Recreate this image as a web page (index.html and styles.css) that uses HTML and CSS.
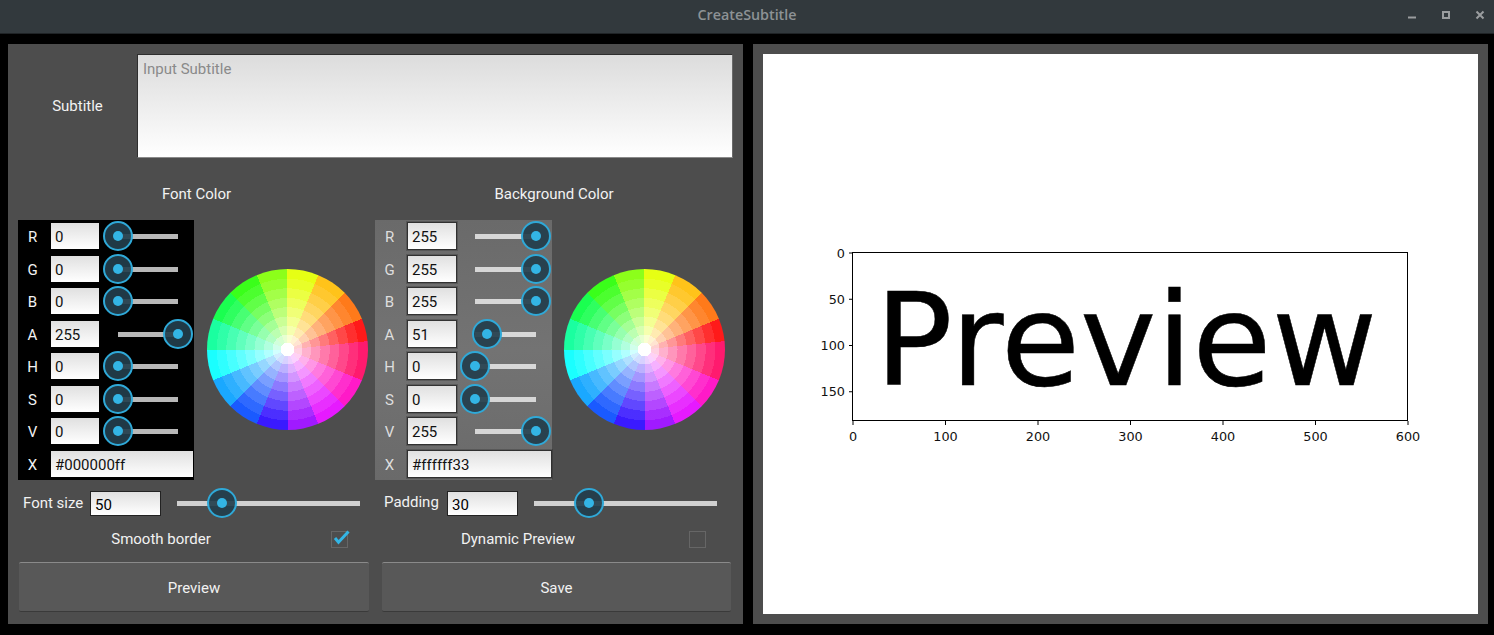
FILE: index.html
```html
<!DOCTYPE html>
<html lang="en">
<head>
<meta charset="utf-8">
<title>CreateSubtitle</title>
<link rel="stylesheet" href="styles.css">
</head>
<body>
<header class="titlebar">
  <span class="title">CreateSubtitle</span>
  <div class="wm">
    <svg class="wm-icon" viewBox="0 0 10 10"><path d="M1 7.5H9" class="wm-line"/></svg>
    <svg class="wm-icon" viewBox="0 0 10 10"><path d="M2 2H8V8H2Z" class="wm-line"/></svg>
    <svg class="wm-icon" viewBox="0 0 10 10"><path d="M1.5 1.5L8.5 8.5M8.5 1.5L1.5 8.5" class="wm-line"/></svg>
  </div>
</header>
<main class="main">
  <section class="panel controls">
    <div class="subtitle-row">
      <label class="subtitle-label">Subtitle</label>
      <textarea class="subtitle-input" placeholder="Input Subtitle"></textarea>
    </div>
    <div class="heads">
      <div class="head head-a">Font Color</div>
      <div class="head head-b">Background Color</div>
    </div>
    <div class="colors">
      <div class="color-col col-a">
        <div class="channels ch-black">
          <div class="ch"><span class="ch-l">R</span><input class="field" value="0"><div class="slider"><div class="track"></div><div class="thumb" style="left:0%"></div></div></div>
          <div class="ch"><span class="ch-l">G</span><input class="field" value="0"><div class="slider"><div class="track"></div><div class="thumb" style="left:0%"></div></div></div>
          <div class="ch"><span class="ch-l">B</span><input class="field" value="0"><div class="slider"><div class="track"></div><div class="thumb" style="left:0%"></div></div></div>
          <div class="ch"><span class="ch-l">A</span><input class="field" value="255"><div class="slider"><div class="track"></div><div class="thumb" style="left:100%"></div></div></div>
          <div class="ch"><span class="ch-l">H</span><input class="field" value="0"><div class="slider"><div class="track"></div><div class="thumb" style="left:0%"></div></div></div>
          <div class="ch"><span class="ch-l">S</span><input class="field" value="0"><div class="slider"><div class="track"></div><div class="thumb" style="left:0%"></div></div></div>
          <div class="ch"><span class="ch-l">V</span><input class="field" value="0"><div class="slider"><div class="track"></div><div class="thumb" style="left:0%"></div></div></div>
          <div class="ch"><span class="ch-l">X</span><input class="field field-wide" value="#000000ff"></div>
        </div>
        <div class="wheel"><div class="wheel-rings"></div></div>
      </div>
      <div class="color-col col-b">
        <div class="channels ch-grey">
          <div class="ch"><span class="ch-l">R</span><input class="field" value="255"><div class="slider"><div class="track"></div><div class="thumb" style="left:100%"></div></div></div>
          <div class="ch"><span class="ch-l">G</span><input class="field" value="255"><div class="slider"><div class="track"></div><div class="thumb" style="left:100%"></div></div></div>
          <div class="ch"><span class="ch-l">B</span><input class="field" value="255"><div class="slider"><div class="track"></div><div class="thumb" style="left:100%"></div></div></div>
          <div class="ch"><span class="ch-l">A</span><input class="field" value="51"><div class="slider"><div class="track"></div><div class="thumb" style="left:20%"></div></div></div>
          <div class="ch"><span class="ch-l">H</span><input class="field" value="0"><div class="slider"><div class="track"></div><div class="thumb" style="left:0%"></div></div></div>
          <div class="ch"><span class="ch-l">S</span><input class="field" value="0"><div class="slider"><div class="track"></div><div class="thumb" style="left:0%"></div></div></div>
          <div class="ch"><span class="ch-l">V</span><input class="field" value="255"><div class="slider"><div class="track"></div><div class="thumb" style="left:100%"></div></div></div>
          <div class="ch"><span class="ch-l">X</span><input class="field field-wide" value="#ffffff33"></div>
        </div>
        <div class="wheel"><div class="wheel-rings"></div></div>
      </div>
    </div>
    <div class="sizes">
      <div class="size size-a">
        <span class="size-l">Font size</span>
        <input class="num" value="50">
        <div class="slider big"><div class="track"></div><div class="thumb" style="left:24.6%"></div></div>
      </div>
      <div class="size size-b">
        <span class="size-l">Padding</span>
        <input class="num" value="30">
        <div class="slider big"><div class="track"></div><div class="thumb" style="left:30.2%"></div></div>
      </div>
    </div>
    <div class="checks">
      <div class="check">
        <span class="check-l">Smooth border</span>
        <span class="box">
          <svg class="tick" viewBox="0 0 20 20"><path d="M4 9L7.5 13.2L17.5 2.5"/></svg>
        </span>
      </div>
      <div class="check check-b">
        <span class="check-l">Dynamic Preview</span>
        <span class="box"></span>
      </div>
    </div>
    <div class="buttons">
      <button class="btn btn-a">Preview</button>
      <button class="btn btn-b">Save</button>
    </div>
  </section>
  <section class="panel output">
    <div class="canvas">
      <svg class="plot" viewBox="0 0 715 560">
        <text class="big-text" x="112" y="331">Preview</text>
        <rect class="axes" x="89.5" y="198.5" width="555" height="168"/>
        <path class="ticks" d="M90 367v4M182.500 367v4M275 367v4M367.500 367v4M460 367v4M552.500 367v4M645 367v4M86 199h4M86 245.250h4M86 291.500h4M86 337.750h4"/>
        <text class="tx" x="90" y="387">0</text>
        <text class="tx" x="182.500" y="387">100</text>
        <text class="tx" x="275" y="387">200</text>
        <text class="tx" x="367.500" y="387">300</text>
        <text class="tx" x="460" y="387">400</text>
        <text class="tx" x="552.500" y="387">500</text>
        <text class="tx" x="645" y="387">600</text>
        <text class="ty" x="82" y="203.500">0</text>
        <text class="ty" x="82" y="250">50</text>
        <text class="ty" x="82" y="296">100</text>
        <text class="ty" x="82" y="342">150</text>
      </svg>
    </div>
  </section>
</main>
</body>
</html>
```
FILE: styles.css
```css
* { box-sizing: border-box; }
html, body { margin: 0; height: 100%; overflow: hidden; }
body {
  background: #000;
  font-family: Roboto, "Liberation Sans", sans-serif;
  font-size: 15px;
  color: #f2f2f2;
  display: flex;
  flex-direction: column;
}
.titlebar {
  height: 34px;
  flex: none;
  background: #32393d;
  border-bottom: 1px solid #1f2326;
  display: flex;
  align-items: center;
  justify-content: center;
  position: relative;
}
.title {
  font-family: "Open Sans", sans-serif;
  font-weight: 600;
  font-size: 14.3px;
  color: #8d9295;
  position: relative;
  top: -2px;
}
.wm {
  position: absolute;
  right: 9px;
  top: 10px;
  display: flex;
  gap: 24px;
}
.wm-icon { width: 10px; height: 10px; display: block; }
.wm-line { fill: none; stroke: #9a9d9f; stroke-width: 2; }

.main {
  flex: 1;
  display: flex;
  gap: 10px;
  padding: 10px 6px 11px 8px;
  min-height: 0;
}
.panel { background: #4d4d4d; }
.controls {
  width: 735px;
  flex: none;
  padding: 10px 10px 0 10px;
}
.output {
  flex: 1;
  padding: 10px;
  display: flex;
}

.subtitle-row { display: flex; height: 104px; }
.subtitle-label {
  width: 119px;
  flex: none;
  text-align: center;
  align-self: center;
}
.subtitle-input {
  flex: 1;
  resize: none;
  margin: 0;
  outline: none;
  border: 1px solid #2e2e2e;
  border-bottom-color: #8a8a8a;
  border-right-color: #6a6a6a;
  padding: 4px 5px;
  background: linear-gradient(#dcdcdc, #ffffff);
  background-clip: padding-box;
  font: 15px/20px Roboto, sans-serif;
  color: #000;
}
.subtitle-input::placeholder { color: #8a8a8a; opacity: 1; }

.heads { display: flex; height: 62px; }
.head { padding-top: 26px; text-align: center; line-height: 20px; }
.head-a { width: 357px; }
.head-b { flex: 1; }

.colors { display: flex; height: 260px; }
.color-col { display: flex; align-items: flex-start; }
.col-a { width: 357px; }
.col-b { flex: 1; }
.channels { width: 176px; height: 260px; flex: none; }
.ch-black { background: #000; }
.ch-grey { background: linear-gradient(#6a6a6a, #737373 50%, #6a6a6a); width: 177px; }
.ch { height: 32.5px; display: flex; align-items: center; }
.ch-l { width: 29px; margin-right: 3px; padding-top: 2px; text-align: center; flex: none; }
.ch-grey .ch-l { color: #dedede; }
.field {
  width: 50px;
  height: 28px;
  flex: none;
  margin: 0;
  border: 1px solid rgba(0, 0, 0, .55);
  padding: 2px 4px 0;
  outline: none;
  background: linear-gradient(#e0e0e0, #ffffff);
  background-clip: padding-box;
  font: 15px Roboto, sans-serif;
  color: #111;
}
.ch-grey .field { box-shadow: 0 0 0 1px rgba(0, 0, 0, .18); }
.field-wide { flex: 1; width: auto; min-width: 0; }
.slider { position: relative; height: 30px; flex: 1; margin: 0 16px 0 18px; }
.track {
  position: absolute;
  left: 0;
  right: 0;
  top: 50%;
  height: 5px;
  margin-top: -2px;
  background: rgba(255, 255, 255, .72);
}
.thumb {
  position: absolute;
  top: 0;
  width: 30px;
  height: 30px;
  margin-left: -15px;
  border-radius: 50%;
  border: 2px solid #2fa9d8;
  background: rgba(35, 62, 76, .92);
}
.thumb::after {
  content: "";
  position: absolute;
  left: 8px;
  top: 8px;
  width: 10px;
  height: 10px;
  border-radius: 50%;
  background: #33b5e5;
}

.wheel {
  width: 161px;
  height: 161px;
  flex: none;
  margin: 49px 0 0 13px;
  border-radius: 50%;
  overflow: hidden;
  background: conic-gradient(
    #e6ff14 0 22.5deg, #ffc31a 0 45deg, #ff7a1a 0 67.5deg, #ff1a1a 0 84deg,
    #ff1a6e 0 112.5deg, #ff1ac8 0 135deg, #e61aff 0 157.5deg, #a01aff 0 180deg,
    #3a1aff 0 202.5deg, #1a5aff 0 225deg, #1aa8ff 0 247.5deg, #1affff 0 270deg,
    #1affa0 0 292.5deg, #1aff50 0 315deg, #3aff1a 0 337.5deg, #8cff1a 0 360deg);
}
.col-b .wheel { margin-left: 12px; }
.wheel-rings {
  width: 100%;
  height: 100%;
  background: radial-gradient(circle closest-side,
    #fff 0 8.6%,
    rgba(255,255,255,.80) 0 18.5%,
    rgba(255,255,255,.66) 0 29.5%,
    rgba(255,255,255,.54) 0 41%,
    rgba(255,255,255,.42) 0 52.5%,
    rgba(255,255,255,.31) 0 64%,
    rgba(255,255,255,.20) 0 76%,
    rgba(255,255,255,.09) 0 88%,
    rgba(255,255,255,0) 0 100%);
}

.sizes { display: flex; height: 46px; }
.size { display: flex; align-items: flex-start; padding-top: 8px; }
.size-a { width: 357px; padding-left: 5px; }
.size-b { flex: 1; padding-left: 9px; }
.size-l { line-height: 30px; margin-right: 6px; width: 61px; white-space: nowrap; }
.size-b .size-l { width: 53px; margin-right: 10px; line-height: 28px; }
.num {
  width: 71px;
  height: 25px;
  flex: none;
  margin: 3px 0 0;
  border: 1px solid #222;
  padding: 3px 4px 0;
  outline: none;
  background: linear-gradient(#e0e0e0, #ffffff);
  background-clip: padding-box;
  font: 15px Roboto, sans-serif;
  color: #000;
}
.slider.big { flex: none; width: 183px; margin: 0 0 0 16px; }
.slider.big .track { background: #d0d0d0; }

.checks { display: flex; height: 26px; }
.check { width: 357px; display: flex; align-items: center; }
.check-b { width: auto; flex: 1; }
.check-l { width: 286px; text-align: center; flex: none; }
.box {
  width: 17px;
  height: 17px;
  margin-left: 27px;
  border: 1px solid #666;
  position: relative;
  flex: none;
}
.check-b .box { margin-left: 28px; }
.tick {
  position: absolute;
  left: -1px;
  top: -3px;
  width: 20px;
  height: 20px;
  overflow: visible;
}
.tick path { fill: none; stroke: #33b5e5; stroke-width: 3; }

.buttons { display: flex; gap: 13px; margin: 10px 0 0 1px; }
.btn {
  height: 50px;
  margin: 0;
  border: 0;
  border-top: 1px solid #8a8a8a;
  border-bottom: 1px solid #3a3a3a;
  border-radius: 2px;
  padding: 2px 0 0;
  background: #585858;
  color: #f2f2f2;
  font: 15px Roboto, sans-serif;
}
.btn-a { width: 350px; }
.btn-b { width: 349px; }

.canvas { flex: 1; background: #fff; }
.plot { display: block; width: 100%; height: 100%; }
.big-text { font: 129px "DejaVu Sans", sans-serif; fill: #000; stroke: #000; stroke-width: .5px; }
.axes { fill: none; stroke: #000; stroke-width: 1; }
.ticks { fill: none; stroke: #000; stroke-width: 1; }
.tx, .ty { font: 12.8px "DejaVu Sans", sans-serif; fill: #111; }
.tx { text-anchor: middle; }
.ty { text-anchor: end; }
```
